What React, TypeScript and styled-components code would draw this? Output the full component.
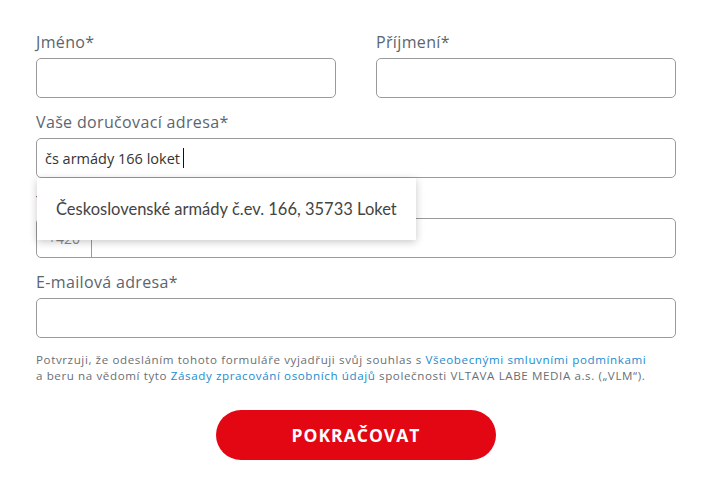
import React from "react";
import styled, { createGlobalStyle } from "styled-components";

const Global = createGlobalStyle`
  html, body { margin: 0; padding: 0; background: #fff; }
  body { font-family: "Open Sans", "Noto Sans", sans-serif; }
  * { box-sizing: border-box; }
`;

const Form = styled.form`
  width: 640px;
  margin: 32px 0 0 36px;
  display: flex;
  flex-direction: column;
  gap: 14px;
`;

const Row = styled.div`
  display: grid;
  grid-template-columns: 300px 300px;
  column-gap: 40px;
`;

const Field = styled.div`
  position: relative;
  display: flex;
  flex-direction: column;
  gap: 6px;
`;

const Label = styled.label`
  font-size: 16px;
  line-height: 20px;
  letter-spacing: 0.35px;
  color: #5b6570;
  font-weight: 400;
`;

const Box = styled.div`
  height: 40px;
  border: 1px solid #9a9a9a;
  border-radius: 5px;
  background: #fff;
  display: flex;
  align-items: center;
  padding: 0 0 0 8px;
  font-size: 14.5px;
  color: #333;
`;

const Caret = styled.span`
  display: inline-block;
  width: 1px;
  height: 20px;
  background: #111;
  margin-left: 3px;
`;

const PhoneBox = styled(Box)`
  padding: 0;
`;

const Prefix = styled.div`
  width: 55px;
  height: 100%;
  border-right: 1px solid #9a9a9a;
  display: flex;
  align-items: center;
  justify-content: center;
  color: #888;
  font-size: 14px;
`;

const Dropdown = styled.div`
  position: absolute;
  left: 1px;
  top: 66px;
  width: 379px;
  height: 62px;
  background: #fff;
  box-shadow: 0 2px 8px rgba(0, 0, 0, 0.22);
  display: flex;
  align-items: center;
  padding-left: 19px;
  font-family: "Lato", sans-serif;
  font-size: 16.5px;
  color: #444;
  z-index: 2;
`;

const Note = styled.p`
  margin: 0;
  font-size: 11.6px;
  line-height: 16px;
  letter-spacing: 0.6px;
  color: #6a6f75;
  white-space: nowrap;
`;

const Link = styled.a`
  color: #1d8ccf;
  text-decoration: none;
`;

const Submit = styled.button`
  align-self: center;
  margin-top: 12px;
  width: 280px;
  height: 50px;
  border: none;
  border-radius: 25px;
  background: #e30613;
  color: #fff;
  font-family: "Open Sans", sans-serif;
  font-weight: 700;
  font-size: 17.5px;
  letter-spacing: 1px;
  cursor: pointer;
`;

export default function App() {
  return (
    <>
      <Global />
      <Form onSubmit={(e) => e.preventDefault()}>
        <Row>
          <Field>
            <Label>Jméno*</Label>
            <Box />
          </Field>
          <Field>
            <Label>Příjmení*</Label>
            <Box />
          </Field>
        </Row>
        <Field>
          <Label>Vaše doručovací adresa*</Label>
          <Box>
            čs armády 166 loket
            <Caret />
          </Box>
          <Dropdown>Československé armády č.ev. 166, 35733 Loket</Dropdown>
        </Field>
        <Field>
          <Label>Telefon*</Label>
          <PhoneBox>
            <Prefix>+420</Prefix>
          </PhoneBox>
        </Field>
        <Field>
          <Label>E-mailová adresa*</Label>
          <Box />
        </Field>
        <Note>
          Potvrzuji, že odesláním tohoto formuláře vyjadřuji svůj souhlas s{" "}
          <Link href="#">Všeobecnými smluvními podmínkami</Link>
          <br />a beru na vědomí tyto{" "}
          <Link href="#">Zásady zpracování osobních údajů</Link> společnosti
          VLTAVA LABE MEDIA a.s. („VLM“).
        </Note>
        <Submit type="submit">POKRAČOVAT</Submit>
      </Form>
    </>
  );
}
